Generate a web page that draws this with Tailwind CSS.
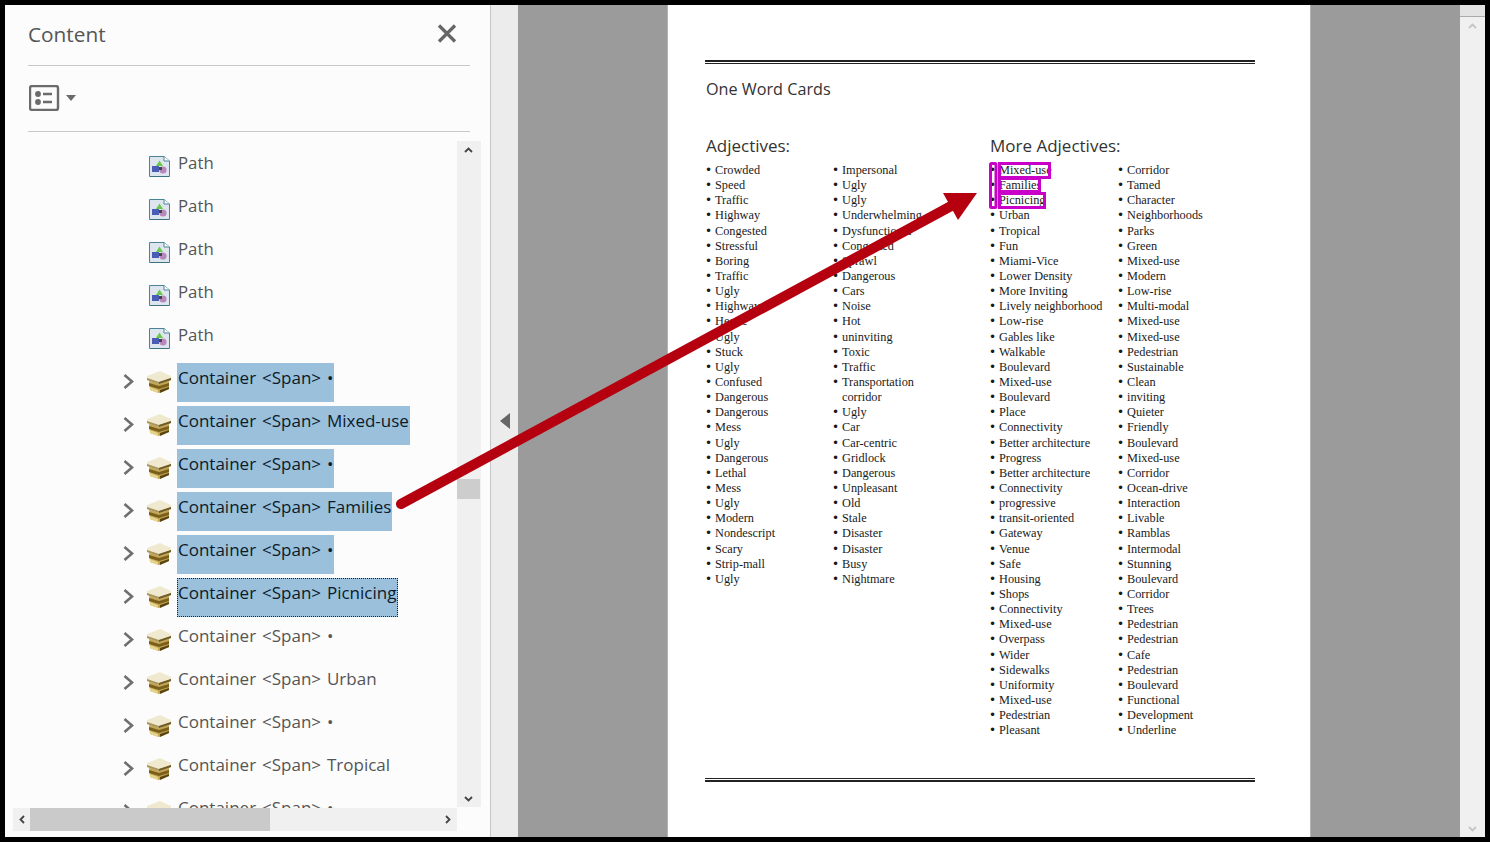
<!DOCTYPE html>
<html>

<head>
    <meta charset="UTF-8">
    <title>Content</title>
    <script src="https://cdn.jsdelivr.net/npm/@tailwindcss/browser@4"></script>
</head>

<body class="bg-black">
    <div class="w-[1490px] h-[842px] bg-black pt-[5px] pl-[5px] pr-[5px] pb-[5px] flex relative overflow-hidden font-['Open_Sans',sans-serif]">

        <!-- content panel -->
        <div class="w-[486px] h-[832px] bg-[#fcfcfc] border-r border-[#c6c6c6] flex flex-col shrink-0">
            <div class="ml-[23px] mr-[20px] h-[61px] border-b border-[#c8c8c8] flex items-start justify-between pr-[13px]">
                <span class="text-[20.8px] leading-[30px] mt-[15px] -translate-y-px text-[#555]">Content</span>
                <svg class="mt-[19px]" width="20" height="19" viewBox="0 0 20 19"><path d="M2 1.5 18 17.500M18 1.500 2 17.500" stroke="#666" stroke-width="3.2" fill="none"/></svg>
            </div>
            <div class="ml-[23px] mr-[20px] h-[66px] border-b border-[#c8c8c8] flex items-start pt-[19px] pl-[1px]">
                <svg width="48" height="26" viewBox="0 0 48 26">
                    <rect x="1" y="1" width="28" height="24" rx="2" fill="none" stroke="#6b6b6b" stroke-width="2.4"/>
                    <circle cx="9" cy="9" r="2.9" fill="#6b6b6b"/>
                    <circle cx="9" cy="17" r="2.9" fill="#6b6b6b"/>
                    <path d="M14 9h9M14 17h9" stroke="#6b6b6b" stroke-width="2.4"/>
                    <path d="M37 10h10l-5 6z" fill="#6b6b6b"/>
                </svg>
            </div>
            <div class="flex ml-[8px] mt-[9px] h-[667px]">
                <div id="tree" class="w-[444px] h-[667px] overflow-hidden pt-[7px]"></div>
                <div class="w-[24px] h-[666px] bg-[#f0f0f0] relative">
                    <svg class="absolute left-[7px] top-[6px]" width="9" height="6" viewBox="0 0 9 6"><path d="M1 5 4.500 1.500 8 5" stroke="#444" stroke-width="1.8" fill="none"/></svg>
                    <div class="absolute left-0 top-[338px] w-[23px] h-[20px] bg-[#cdcdcd]"></div>
                    <svg class="absolute left-[7px] top-[655px]" width="9" height="6" viewBox="0 0 9 6"><path d="M1 1 4.500 4.500 8 1" stroke="#444" stroke-width="1.8" fill="none"/></svg>
                </div>
            </div>
            <div class="ml-[8px] w-[444px] h-[23px] bg-[#f0f0f0] flex items-center">
                <div class="w-[17px] flex justify-center">
                    <svg width="6" height="9" viewBox="0 0 6 9"><path d="M5 1 1.500 4.500 5 8" stroke="#444" stroke-width="1.8" fill="none"/></svg>
                </div>
                <div class="w-[240px] h-[23px] bg-[#cacaca]"></div>
                <div class="flex-1 flex justify-end pr-[6px]">
                    <svg width="6" height="9" viewBox="0 0 6 9"><path d="M1 1 4.500 4.500 1 8" stroke="#444" stroke-width="1.8" fill="none"/></svg>
                </div>
            </div>
        </div>

        <!-- splitter -->
        <div class="w-[27px] h-[832px] bg-[#ececec] flex items-start pt-[408px] pl-[9px] shrink-0">
            <svg width="10" height="16" viewBox="0 0 10 16"><path d="M10 0v16L0 8z" fill="#666"/></svg>
        </div>

        <!-- document view -->
        <div class="w-[942px] h-[832px] bg-[#9b9b9b] flex justify-center shrink-0">
            <div class="w-[644px] h-[832px] bg-white border-x border-[#b4b4b4] pl-[37px] shrink-0">
                <div class="w-[550px] mt-[55px] h-[1px] border-t-2 border-b border-[#222] box-content"></div>
                <div class="text-[16.2px] leading-[24px] text-[#333] mt-[13px] ml-[1px]">One Word Cards</div>
                <div class="flex mt-[33px]">
                    <div class="w-[284px]">
                        <div class="text-[17px] leading-[24px] text-[#333] ml-[1px]">Adjectives:</div>
                        <div class="flex mt-[5px]">
                            <ul id="col1" class="w-[127px]"></ul>
                            <ul id="col2" class="w-[157px]"></ul>
                        </div>
                    </div>
                    <div class="w-[266px]">
                        <div class="text-[17px] leading-[24px] text-[#333] ml-[1px]">More Adjectives:</div>
                        <div class="flex mt-[5px]">
                            <ul id="col3" class="w-[128px]"></ul>
                            <ul id="col4" class="w-[138px]"></ul>
                        </div>
                    </div>
                </div>
                <div class="w-[550px] mt-[40px] h-[1px] border-t border-b-2 border-[#222] box-content"></div>
            </div>
        </div>

        <!-- page scrollbar -->
        <div class="w-[25px] h-[832px] bg-[#f0f0f0] shrink-0 relative">
            <div class="h-[12px] bg-[#e3e3e3] border-b border-[#aaa]"></div>
            <svg class="absolute left-[8px] top-[18px]" width="9" height="6" viewBox="0 0 9 6"><path d="M1 5 4.500 1.500 8 5" stroke="#c4c4c4" stroke-width="1.8" fill="none"/></svg>
            <svg class="absolute left-[8px] top-[821px]" width="9" height="6" viewBox="0 0 9 6"><path d="M1 1 4.500 4.500 8 1" stroke="#c4c4c4" stroke-width="1.8" fill="none"/></svg>
        </div>

        <!-- annotation overlay -->
        <svg class="absolute left-0 top-0 pointer-events-none" width="1490" height="842" viewBox="0 0 1490 842">
            <g fill="none" stroke="#c800c8" stroke-width="3">
                <rect x="990.500" y="163.500" width="5.500" height="44" rx="1"/>
                <rect x="999.500" y="163.500" width="50" height="14"/>
                <rect x="999.500" y="178.500" width="40" height="13"/>
                <rect x="999.500" y="193.500" width="45" height="14"/>
            </g>
            <path d="M401 504 953 205" stroke="#b5000f" stroke-width="10" stroke-linecap="round"/>
            <path d="M943 193H977L958 220z" fill="#b5000f"/>
        </svg>
    </div>

    <script>
        var pathIcon = `<svg class="mt-[8px] ml-[2px]" width="21" height="21" viewBox="0 0 21 21">
            <path d="M.5.5H15L20.500 5V20.500H.5z" fill="#dde6ee" stroke="#4a8494"/>
            <path d="M15 .5V5H20.500" fill="#fff" stroke="#4a8494"/>
            <path d="M1 20h19v.5H1z" fill="#2f5f6f"/>
            <rect x="3" y="10" width="7" height="6" fill="#4a5cb4"/>
            <circle cx="14" cy="14" r="3.600" fill="#b887bd"/>
            <path d="M10.500 4.500 14 10H7z" fill="#6cc84a"/>
            <rect x="10" y="11" width="3" height="3" fill="#444"/>
        </svg>`;
        var boxIcon = `<svg class="mt-[7px]" width="24" height="23" viewBox="0 0 24 23">
            <path d="M2 10 12 13 22 10V19L12 23 3 20z" fill="#c2a452"/>
            <path d="M2 13 12 16 22 13V16L12 19 2 16z" fill="#7a5f1c"/>
            <path d="M3 17 11 20V23L3 20z" fill="#e4d48e"/>
            <path d="M13 20 22 17V19L13 23z" fill="#5a4410"/>
            <path d="M0 6 13 1 24 6V10L12 14 0 10z" fill="#efe9d0"/>
            <path d="M0 8 12 12 24 8V10L12 14 0 10z" fill="#a8945a"/>
            <path d="M12 12 24 8V10L12 14z" fill="#6e5a24"/>
        </svg>`;
        var chevron = `<svg class="mt-[11px]" width="11" height="15" viewBox="0 0 11 15"><path d="M1.500 1 9 7.500 1.500 14" stroke="#6f6f6f" stroke-width="2.600" fill="none"/></svg>`;

        var rows = [
            ["Path", "path"], ["Path", "path"], ["Path", "path"], ["Path", "path"], ["Path", "path"],
            ["Container &lt;Span&gt; •", "sel"], ["Container &lt;Span&gt; Mixed-use", "sel"],
            ["Container &lt;Span&gt; •", "sel"], ["Container &lt;Span&gt; Families", "sel"],
            ["Container &lt;Span&gt; •", "sel"], ["Container &lt;Span&gt; Picnicing", "focus"],
            ["Container &lt;Span&gt; •", ""], ["Container &lt;Span&gt; Urban", ""],
            ["Container &lt;Span&gt; •", ""], ["Container &lt;Span&gt; Tropical", ""],
            ["Container &lt;Span&gt; •", ""]
        ];
        var tree = document.getElementById("tree");
        var html = "";
        for (let i = 0; i < rows.length; i++) {
            var label = rows[i][0], kind = rows[i][1];
            if (kind == "path") {
                html += `<div class="flex h-[43px] pl-[134px]"><div class="w-[30px]">${pathIcon}</div><span class="text-[16.8px] leading-[30px] pl-[1px] text-[#555]">${label}</span></div>`;
            } else {
                var text = `<span class="text-[17px] [word-spacing:1.5px] leading-[30px] pl-[1px] text-[#555] whitespace-nowrap">${label}</span>`;
                if (kind == "sel") text = `<span class="text-[17px] [word-spacing:1.5px] leading-[30px] pl-[1px] pr-[1px] h-[39px] bg-[#9ac0dc] text-[#0c1a2a] whitespace-nowrap">${label}</span>`;
                if (kind == "focus") text = `<span class="text-[17px] [word-spacing:1.5px] leading-[28px] pr-[1px] h-[39px] bg-[#9ac0dc] text-[#0c1a2a] whitespace-nowrap border border-dotted border-[#222]">${label}</span>`;
                html += `<div class="flex h-[43px] pl-[110px]"><div class="w-[24px]">${chevron}</div><div class="w-[30px]">${boxIcon}</div>${text}</div>`;
            }
        }
        tree.innerHTML = html;

        var lists = {
            col1: ["Crowded","Speed","Traffic","Highway","Congested","Stressful","Boring","Traffic","Ugly","Highway","Hectic","Ugly","Stuck","Ugly","Confused","Dangerous","Dangerous","Mess","Ugly","Dangerous","Lethal","Mess","Ugly","Modern","Nondescript","Scary","Strip-mall","Ugly"],
            col2: ["Impersonal","Ugly","Ugly","Underwhelming","Dysfunctional","Congested","Sprawl","Dangerous","Cars","Noise","Hot","uninviting","Toxic","Traffic","Transportation<br>corridor","Ugly","Car","Car-centric","Gridlock","Dangerous","Unpleasant","Old","Stale","Disaster","Disaster","Busy","Nightmare"],
            col3: ["Mixed-use","Families","Picnicing","Urban","Tropical","Fun","Miami-Vice","Lower Density","More Inviting","Lively neighborhood","Low-rise","Gables like","Walkable","Boulevard","Mixed-use","Boulevard","Place","Connectivity","Better architecture","Progress","Better architecture","Connectivity","progressive","transit-oriented","Gateway","Venue","Safe","Housing","Shops","Connectivity","Mixed-use","Overpass","Wider","Sidewalks","Uniformity","Mixed-use","Pedestrian","Pleasant"],
            col4: ["Corridor","Tamed","Character","Neighborhoods","Parks","Green","Mixed-use","Modern","Low-rise","Multi-modal","Mixed-use","Mixed-use","Pedestrian","Sustainable","Clean","inviting","Quieter","Friendly","Boulevard","Mixed-use","Corridor","Ocean-drive","Interaction","Livable","Ramblas","Intermodal","Stunning","Boulevard","Corridor","Trees","Pedestrian","Pedestrian","Cafe","Pedestrian","Boulevard","Functional","Development","Underline"]
        };
        for (var id in lists) {
            document.getElementById(id).innerHTML = lists[id].map(function (w) {
                return `<li class="flex text-[12.3px] leading-[15.135px] text-[#1a1a1a] font-['Liberation_Serif',serif]"><span class="w-[10px] text-[12px] leading-[15px] font-['DejaVu_Sans',sans-serif] shrink-0">•</span><span class="whitespace-nowrap">${w}</span></li>`;
            }).join("");
        }
    </script>
</body>
</html>
